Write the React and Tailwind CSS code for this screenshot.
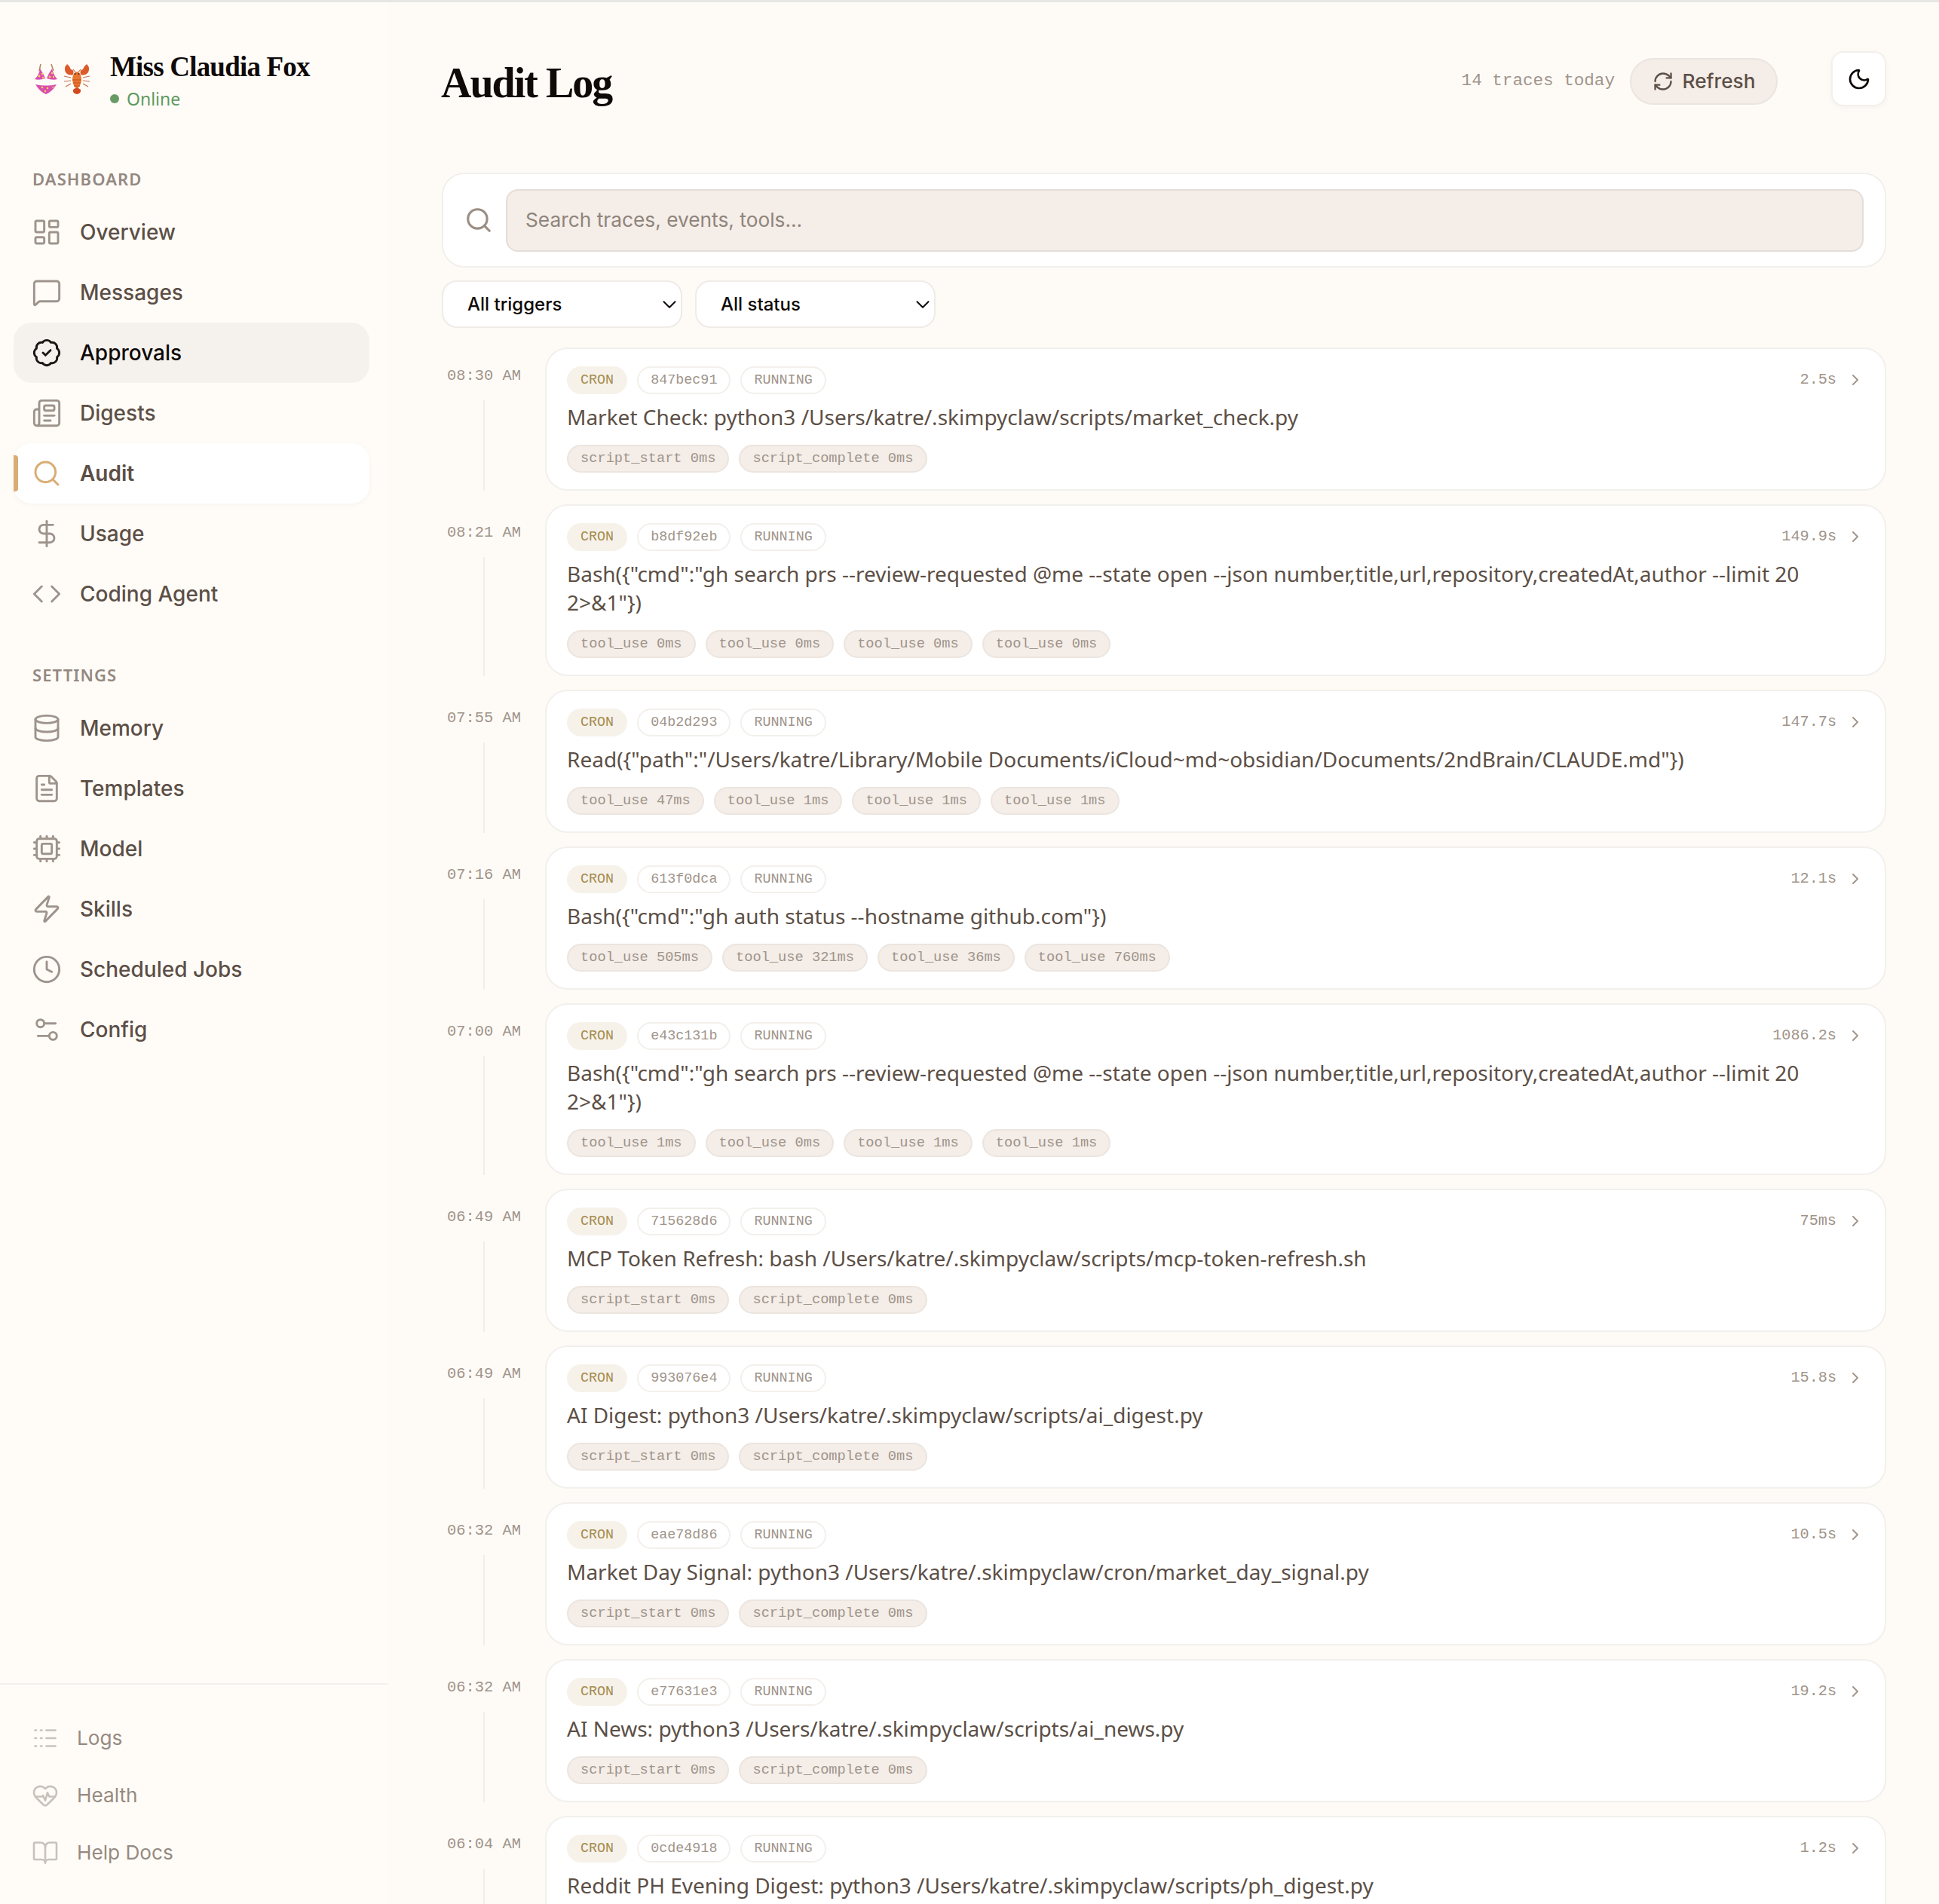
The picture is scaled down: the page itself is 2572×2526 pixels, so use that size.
import {
  LayoutDashboard,
  MessageSquare,
  BadgeCheck,
  Newspaper,
  Search,
  DollarSign,
  ChevronRight,
  ChevronDown,
  Code,
  Database,
  FileText,
  Cpu,
  Zap,
  Clock,
  Settings2,
  Logs,
  HeartPulse,
  BookOpen,
  RefreshCw,
  Moon,
} from "lucide-react";

const MAIN_NAV = [
  { label: "Overview", icon: LayoutDashboard },
  { label: "Messages", icon: MessageSquare },
  { label: "Approvals", icon: BadgeCheck, state: "hover" },
  { label: "Digests", icon: Newspaper },
  { label: "Audit", icon: Search, state: "active" },
  { label: "Usage", icon: DollarSign },
  { label: "Coding Agent", icon: Code },
];

const SETTINGS_NAV = [
  { label: "Memory", icon: Database },
  { label: "Templates", icon: FileText },
  { label: "Model", icon: Cpu },
  { label: "Skills", icon: Zap },
  { label: "Scheduled Jobs", icon: Clock },
  { label: "Config", icon: Settings2 },
];

const FOOTER_NAV = [
  { label: "Logs", icon: Logs },
  { label: "Health", icon: HeartPulse },
  { label: "Help Docs", icon: BookOpen },
];

const SCRIPT_EVENTS = ["script_start 0ms", "script_complete 0ms"];
const GH_SEARCH =
  'Bash({"cmd":"gh search prs --review-requested @me --state open --json number,title,url,repository,createdAt,author --limit 20 2>&1"})';

const TRACES = [
  {
    time: "08:30 AM",
    id: "847bec91",
    duration: "2.5s",
    title: "Market Check: python3 /Users/katre/.skimpyclaw/scripts/market_check.py",
    events: SCRIPT_EVENTS,
  },
  {
    time: "08:21 AM",
    id: "b8df92eb",
    duration: "149.9s",
    title: GH_SEARCH,
    events: ["tool_use 0ms", "tool_use 0ms", "tool_use 0ms", "tool_use 0ms"],
  },
  {
    time: "07:55 AM",
    id: "04b2d293",
    duration: "147.7s",
    title:
      'Read({"path":"/Users/katre/Library/Mobile Documents/iCloud~md~obsidian/Documents/2ndBrain/CLAUDE.md"})',
    events: ["tool_use 47ms", "tool_use 1ms", "tool_use 1ms", "tool_use 1ms"],
  },
  {
    time: "07:16 AM",
    id: "613f0dca",
    duration: "12.1s",
    title: 'Bash({"cmd":"gh auth status --hostname github.com"})',
    events: ["tool_use 505ms", "tool_use 321ms", "tool_use 36ms", "tool_use 760ms"],
  },
  {
    time: "07:00 AM",
    id: "e43c131b",
    duration: "1086.2s",
    title: GH_SEARCH,
    events: ["tool_use 1ms", "tool_use 0ms", "tool_use 1ms", "tool_use 1ms"],
  },
  {
    time: "06:49 AM",
    id: "715628d6",
    duration: "75ms",
    title: "MCP Token Refresh: bash /Users/katre/.skimpyclaw/scripts/mcp-token-refresh.sh",
    events: SCRIPT_EVENTS,
  },
  {
    time: "06:49 AM",
    id: "993076e4",
    duration: "15.8s",
    title: "AI Digest: python3 /Users/katre/.skimpyclaw/scripts/ai_digest.py",
    events: SCRIPT_EVENTS,
  },
  {
    time: "06:32 AM",
    id: "eae78d86",
    duration: "10.5s",
    title: "Market Day Signal: python3 /Users/katre/.skimpyclaw/cron/market_day_signal.py",
    events: SCRIPT_EVENTS,
  },
  {
    time: "06:32 AM",
    id: "e77631e3",
    duration: "19.2s",
    title: "AI News: python3 /Users/katre/.skimpyclaw/scripts/ai_news.py",
    events: SCRIPT_EVENTS,
  },
  {
    time: "06:04 AM",
    id: "0cde4918",
    duration: "1.2s",
    title: "Reddit PH Evening Digest: python3 /Users/katre/.skimpyclaw/scripts/ph_digest.py",
    events: SCRIPT_EVENTS,
  },
];

// The two emoji next to the name, drawn since no emoji font is available
function BrandMark() {
  return (
    <svg width="76" height="42" viewBox="0 0 76 42" className="shrink-0">
      <path d="M10 1 L8 10 M24 1 L27 10" stroke="#b9895f" strokeWidth="1.6" fill="none" />
      <path d="M2 21 Q8 16 9 7 Q14 14 16 20 Q8 23 2 21Z" fill="#d94fb0" />
      <path d="M18 20 Q20 14 25 7 Q27 16 32 21 Q26 23 18 20Z" fill="#d94fb0" />
      <circle cx="8" cy="17" r="1.4" fill="#f3d34a" />
      <circle cx="12" cy="14" r="1.2" fill="#f3d34a" />
      <circle cx="13" cy="19" r="1.2" fill="#f3d34a" />
      <circle cx="22" cy="18" r="1.4" fill="#f3d34a" />
      <circle cx="25" cy="13" r="1.2" fill="#f3d34a" />
      <circle cx="27" cy="18" r="1.2" fill="#f3d34a" />
      <path d="M3 28 Q17 31 31 28 Q25 38 17 41 Q9 38 3 28Z" fill="#d94fb0" />
      <circle cx="12" cy="32" r="1.3" fill="#f3d34a" />
      <circle cx="19" cy="33" r="1.3" fill="#f3d34a" />
      <circle cx="16" cy="37" r="1.2" fill="#f3d34a" />
      <path d="M25 32 L28 31" stroke="#f3d34a" strokeWidth="1.2" />
      <g fill="none" stroke="#c9704f" strokeWidth="1.2">
        <path d="M50 19 L41 17 M50 23 L41 24 M50 27 L43 31 M66 19 L75 17 M66 23 L75 24 M66 27 L73 31" />
        <path d="M53 8 L57 13 M63 8 L59 13" />
      </g>
      <path d="M45 1 Q40 6 43 12 Q47 17 53 15 Q55 9 50 8 Q49 4 45 1Z" fill="#dd5a2b" />
      <path d="M71 1 Q76 6 73 12 Q69 17 63 15 Q61 9 66 8 Q67 4 71 1Z" fill="#dd5a2b" />
      <path d="M58 11 Q52 13 52 22 Q53 31 58 34 Q63 31 64 22 Q64 13 58 11Z" fill="#e8762f" />
      <path d="M53 35 Q58 30 63 35 Q64 40 58 41 Q52 40 53 35Z" fill="#d3491f" />
      <path d="M52 22 L64 22 M53 26 L63 26 M54 30 L62 30" stroke="#c4501f" strokeWidth="1" />
      <circle cx="55.5" cy="14" r="1" fill="#4a1a0c" />
      <circle cx="60.5" cy="14" r="1" fill="#4a1a0c" />
    </svg>
  );
}

function NavItem({ item }) {
  const Icon = item.icon;
  const active = item.state === "active";
  const hover = item.state === "hover";
  return (
    <div
      className={`relative flex h-[80px] items-center gap-[24px] rounded-[24px] pl-[24px] ${
        active ? "bg-white shadow-[0_2px_6px_rgba(90,70,50,0.05)]" : hover ? "bg-[#f5f2ee]" : ""
      }`}
    >
      {active && (
        <span className="absolute left-0 top-[16px] h-[48px] w-[6px] rounded-r-[4px] bg-[#d9ac73]" />
      )}
      <Icon
        size={40}
        strokeWidth={1.75}
        className={active ? "text-[#d9ac73]" : hover ? "text-[#1c1714]" : "text-[#9e948c]"}
      />
      <span
        className={`text-[28px] ${
          active
            ? "font-semibold text-[#5c4f46]"
            : hover
              ? "font-medium text-[#0f0a08]"
              : "font-medium text-[#5c4f46]"
        }`}
      >
        {item.label}
      </span>
    </div>
  );
}

function Sidebar() {
  return (
    <aside className="flex h-full w-[514px] shrink-0 flex-col font-['Inter',sans-serif]">
      <div className="flex items-start gap-[26px] pl-[44px] pt-[64px]">
        <div className="pt-[17px]">
          <BrandMark />
        </div>
        <div>
          <div className="font-['Liberation_Serif',serif] text-[37px] font-bold leading-[44px] tracking-[-0.8px] text-[#0f0a08]">
            Miss Claudia Fox
          </div>
          <div className="mt-[4px] flex items-center gap-[10px] font-['Noto_Sans',sans-serif] text-[23px] leading-[32px] text-[#5f9a5f]">
            <span className="h-[12px] w-[12px] rounded-full bg-[#689a64]" />
            Online
          </div>
        </div>
      </div>

      <div className="mt-[75px] pl-[18px] pr-[24px]">
        <div className="pl-[25px] font-['Noto_Sans',sans-serif] text-[22px] font-semibold leading-[30px] tracking-[1.1px] text-[#948880]">
          DASHBOARD
        </div>
        <div className="mt-[16px]">
          {MAIN_NAV.map((item) => (
            <NavItem key={item.label} item={item} />
          ))}
        </div>
        <div className="mt-[52px] pl-[25px] font-['Noto_Sans',sans-serif] text-[22px] font-semibold leading-[30px] tracking-[1.1px] text-[#948880]">
          SETTINGS
        </div>
        <div className="mt-[16px]">
          {SETTINGS_NAV.map((item) => (
            <NavItem key={item.label} item={item} />
          ))}
        </div>
      </div>

      <div className="mt-auto border-t-2 border-[#f4f1ec] pb-[30px] pl-[42px] pt-[33px]">
        {FOOTER_NAV.map((item) => {
          const Icon = item.icon;
          return (
            <div key={item.label} className="flex h-[76px] items-center gap-[24px]">
              <Icon size={36} strokeWidth={1.75} className="text-[#c9c2bb]" />
              <span className="text-[26.2px] font-normal text-[#968a80]">{item.label}</span>
            </div>
          );
        })}
      </div>
    </aside>
  );
}

function Chip({ children, tone }) {
  const tones = {
    cron: "border-[#f6f2ea] bg-[#f6f2ea] text-[18.4px] text-[#a58c4f]",
    plain: "border-[#f3f0ec] bg-white text-[18.4px] text-[#a0948a]",
    event: "border-[#ece5df] bg-[#f4ede8] text-[18.7px] text-[#a0948a]",
  };
  return (
    <span
      className={`inline-flex h-[37px] items-center rounded-full border-2 px-[16px] font-['Liberation_Mono',monospace] ${tones[tone]}`}
    >
      {children}
    </span>
  );
}

function TraceRow({ trace }) {
  return (
    <div className="flex gap-[25px]">
      <div className="flex w-[112px] shrink-0 flex-col items-center pt-[26px]">
        <div className="font-['Liberation_Mono',monospace] text-[20.4px] leading-[24px] text-[#a0948a]">
          {trace.time}
        </div>
        <div className="mt-[20px] w-[2px] flex-1 bg-[#f1ece7]" />
      </div>
      <div className="min-w-0 flex-1 rounded-[30px] border-2 border-[#f2f0ed] bg-white pb-[22px] pl-[27px] pr-[27.5px] pt-[23px]">
        <div className="flex items-center justify-between">
          <div className="flex items-center gap-[13px]">
            <Chip tone="cron">CRON</Chip>
            <Chip tone="plain">{trace.id}</Chip>
            <Chip tone="plain">RUNNING</Chip>
          </div>
          <div className="flex items-center gap-[12.5px] font-['Liberation_Mono',monospace] text-[20.2px] text-[#a0948a]">
            {trace.duration}
            <ChevronRight size={24} strokeWidth={2} className="text-[#a2968c]" />
          </div>
        </div>
        <div className="mt-[11px] font-['Noto_Sans',sans-serif] text-[28px] leading-[38px] text-[#5c4f46]">
          {trace.title}
        </div>
        <div className="mt-[18px] flex items-center gap-[13px]">
          {trace.events.map((event, i) => (
            <Chip key={i} tone="event">
              {event}
            </Chip>
          ))}
        </div>
      </div>
    </div>
  );
}

function FilterSelect({ label }) {
  return (
    <div className="flex h-[63px] w-[319px] items-center justify-between rounded-[20px] border-2 border-[#efebe7] bg-white pl-[32px] font-['Inter',sans-serif] text-[24px] font-medium text-[#0f0a08]">
      {label}
      <ChevronDown size={30} strokeWidth={1.6} />
    </div>
  );
}

export default function App() {
  return (
    <div className="h-[2526px] overflow-hidden bg-[#fffcf8]">
      <div className="h-[3px] bg-[#e6e6e4]" />
      <div className="flex h-[2523px]">
        <Sidebar />
        <main className="min-w-0 flex-1 bg-[#fefbf7] pl-[72px] pr-[70px]">
          <header className="flex h-[226px] items-start justify-between pt-[65px]">
            <h1 className="-ml-[1px] mt-[7px] font-['Liberation_Serif',serif] text-[56px] font-bold leading-[70px] tracking-[-2px] text-[#0f0a08]">
              Audit Log
            </h1>
            <div className="flex items-start">
              <span className="mt-[23px] font-['Liberation_Mono',monospace] text-[22.6px] leading-[32px] text-[#a0948a]">
                14 traces today
              </span>
              <button className="ml-[20px] mt-[9px] flex h-[62px] w-[196px] items-center justify-center gap-[12px] rounded-full border-2 border-[#ebe5e0] bg-[#f4ede8] font-['Inter',sans-serif] text-[26.2px] font-medium text-[#5c4f46]">
                <RefreshCw size={28} strokeWidth={2} />
                Refresh
              </button>
              <button className="ml-[71px] flex h-[73px] w-[73px] items-center justify-center rounded-[16px] border-2 border-[#f3f0ec] bg-white text-[#0f0a08] shadow-[0_2px_6px_rgba(90,70,50,0.05)]">
                <Moon size={32} strokeWidth={2} />
              </button>
            </div>
          </header>

          <div className="flex h-[126px] items-center gap-[17px] rounded-[30px] border-2 border-[#f2f0ed] bg-white pl-[28px] pr-[28px]">
            <Search size={38} strokeWidth={2} className="shrink-0 text-[#9a8e84]" />
            <div className="flex h-[83px] flex-1 items-center rounded-[16px] border-2 border-[#e5ddd7] bg-[#f4ede8] pl-[24px] font-['Inter',sans-serif] text-[26.3px] text-[#8f847b]">
              Search traces, events, tools...
            </div>
          </div>

          <div className="mt-[17px] flex gap-[17px]">
            <FilterSelect label="All triggers" />
            <FilterSelect label="All status" />
          </div>

          <div className="mt-[26px] flex flex-col gap-[18px]">
            {TRACES.map((trace) => (
              <TraceRow key={trace.id} trace={trace} />
            ))}
          </div>
        </main>
      </div>
    </div>
  );
}
